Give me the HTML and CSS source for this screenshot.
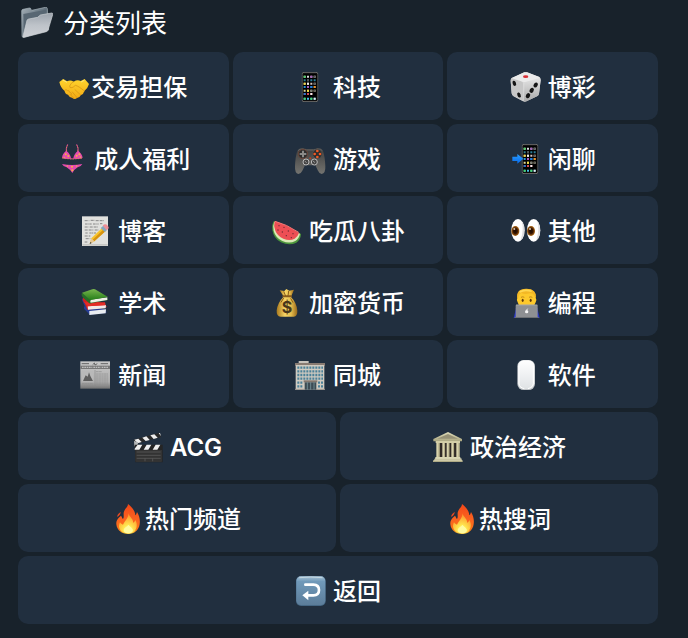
FILE: index.html
```html
<!doctype html>
<html lang="zh-CN">
  <head>
    <meta charset="UTF-8" />
    <meta name="viewport" content="width=device-width, initial-scale=1.0" />
    <title>分类列表</title>
    <link rel="stylesheet" href="styles.css">
  </head>
  <body>
    <!-- 共用渐变和手机图形 -->
    <svg class="defs" width="0" height="0" aria-hidden="true">
      <defs>
        <linearGradient id="folderBack" x1="0" y1="0" x2="1" y2="1">
          <stop offset="0" stop-color="#a5b0b8" />
          <stop offset="0.5" stop-color="#5e6d78" />
          <stop offset="1" stop-color="#94a0a9" />
        </linearGradient>
        <linearGradient id="folderFront" x1="0" y1="0" x2="0" y2="1">
          <stop offset="0" stop-color="#9ba3ac" />
          <stop offset="0.5" stop-color="#bec3c9" />
          <stop offset="1" stop-color="#cdd0d5" />
        </linearGradient>
        <linearGradient id="hand" x1="0" y1="0" x2="0" y2="1">
          <stop offset="0" stop-color="#ffd52e" />
          <stop offset="1" stop-color="#f2a914" />
        </linearGradient>
        <linearGradient id="pad" x1="0" y1="0" x2="0" y2="1">
          <stop offset="0" stop-color="#3d3d3d" />
          <stop offset="1" stop-color="#747470" />
        </linearGradient>
        <linearGradient id="dieSide" x1="0" y1="0" x2="0" y2="1">
          <stop offset="0" stop-color="#e4e4e4" />
          <stop offset="1" stop-color="#a9a9a9" />
        </linearGradient>
        <linearGradient id="arrow" x1="0" y1="0" x2="0" y2="1">
          <stop offset="0" stop-color="#2ba0ff" />
          <stop offset="1" stop-color="#0868e8" />
        </linearGradient>
        <linearGradient id="gold" x1="0" y1="0" x2="1" y2="0">
          <stop offset="0" stop-color="#a9791d" />
          <stop offset="0.4" stop-color="#f6d667" />
          <stop offset="0.7" stop-color="#e6bd4d" />
          <stop offset="1" stop-color="#99691a" />
        </linearGradient>
        <linearGradient id="book" x1="0" y1="0" x2="0" y2="1">
          <stop offset="0" stop-color="#79b64f" />
          <stop offset="1" stop-color="#267f19" />
        </linearGradient>
        <linearGradient id="mouse" x1="0" y1="0" x2="0" y2="1">
          <stop offset="0" stop-color="#ffffff" />
          <stop offset="0.6" stop-color="#eceef0" />
          <stop offset="1" stop-color="#dfe2e4" />
        </linearGradient>
        <linearGradient id="stone" x1="0" y1="0" x2="0" y2="1">
          <stop offset="0" stop-color="#dedbb9" />
          <stop offset="1" stop-color="#aaa680" />
        </linearGradient>
        <linearGradient id="paper" x1="0" y1="0" x2="0" y2="1">
          <stop offset="0" stop-color="#c9c9c9" />
          <stop offset="0.75" stop-color="#adadad" />
          <stop offset="1" stop-color="#737373" />
        </linearGradient>
        <linearGradient id="key" x1="0" y1="0" x2="0" y2="1">
          <stop offset="0" stop-color="#a8c3d6" />
          <stop offset="0.18" stop-color="#7099b9" />
          <stop offset="1" stop-color="#5c7d9a" />
        </linearGradient>
        <linearGradient id="flame" x1="0" y1="0" x2="0" y2="1">
          <stop offset="0" stop-color="#f24718" />
          <stop offset="0.5" stop-color="#fa6220" />
          <stop offset="0.85" stop-color="#fb7417" />
          <stop offset="1" stop-color="#ffd23c" />
        </linearGradient>
        <radialGradient id="flameCore" cx="0.5" cy="0.85" r="0.8">
          <stop offset="0" stop-color="#ffffd5" />
          <stop offset="0.3" stop-color="#ffea51" />
          <stop offset="1" stop-color="#fd9029" />
        </radialGradient>
        <radialGradient id="iris">
          <stop offset="0" stop-color="#160800" />
          <stop offset="0.5" stop-color="#361400" />
          <stop offset="1" stop-color="#b26b18" />
        </radialGradient>

        <symbol id="phone" viewBox="0 0 50 90">
          <rect x="1" y="1" width="48" height="88" rx="6" fill="#111" stroke="#6c6c6a" stroke-width="3" />
          <rect x="5" y="6" width="40" height="79" rx="2" fill="#000" />
          <g stroke-width="6" stroke-dasharray="6 4">
            <path d="M6 14h40" stroke="#d9dbe0" />
            <path d="M6 25h40" stroke="#2a7d98" />
            <path d="M6 35h40" stroke="#d7c5bd" />
            <path d="M6 45h40" stroke="#2994d9" />
            <path d="M6 56h40" stroke="#ded79c" />
            <path d="M6 66h28" stroke="#d34b55" />
            <path d="M6 80h40" stroke="#45bde7" />
          </g>
          <path d="M6 11h6v6H6zM6 77h6v6H6zM26 77h6v6h-6z" fill="#4cd867" />
          <path d="M26 11h6v6h-6zM16 42h6v6h-6z" fill="#a65bbd" />
          <path d="M36 42h6v6h-6z" fill="#ff8f12" />
          <path d="M6 32h6v6H6zM16 53h6v6h-6z" fill="#f0dc3d" />
          <path d="M36 32h6v6h-6zM36 53h6v6h-6zM36 11h6v6h-6zM16 22h6v6h-6z" fill="#555" />
          <path d="M26 53h6v6h-6z" fill="#777" />
          <path d="M6 63h6v6H6zM26 42h6v6h-6z" fill="#2479d6" />
          <path d="M26 63h6v6h-6zM36 77h6v6h-6zM16 32h6v6h-6z" fill="#eee" />
        </symbol>
        <symbol id="fire" viewBox="0 0 90 90">
          <path d="M45 0C56 9 67 21 67 34C70 32 71 27 72 24C79 35 82 47 80 61C77 79 64 90 46 90C26 90 12 79 10 61C9 48 17 41 24 35C27 39 28 43 30 45C35 37 29 29 34 20C37 13 45 9 45 0Z" fill="url(#flame)" />
          <path d="M23 23C18 28 12 31 13 39C19 35 23 30 23 23Z" fill="#e54922" />
          <path d="M46 28C50 40 62 46 60 56C65 55 66 51 67 48C74 59 73 76 62 83C52 90 34 89 25 81C16 73 17 64 21 55C24 59 26 61 30 62C36 50 47 42 46 28Z" fill="url(#flameCore)" />
          <path d="M46 62C50 67 54 68 58 74C63 81 56 88 46 88C36 88 30 82 33 75C36 69 43 68 46 62Z" fill="#fffba0" />
        </symbol>
      </defs>
    </svg>

    <main class="panel">
      <h1 class="title">
        <svg class="title-icon" viewBox="0 0 96 96" aria-hidden="true">
          <path d="M2 12Q2 8 6 7L25 3Q29 2 30 7L32 10L73 1Q78 0 79 5L83 68L8 91Q3 92 3 86Z" fill="url(#folderBack)" stroke="#a4b0b8" stroke-width="2" />
          <path d="M7 21L75 8L78 55L9 74Z" fill="#586773" />
          <path d="M18 40Q19 37 23 36L50 31L58 24L92 18Q97 18 95 23L81 70Q80 73 76 74L10 91Q5 92 6 87Z" fill="url(#folderFront)" stroke="#cfd3d7" stroke-width="2" />
        </svg>
        <span class="label">分类列表</span>
      </h1>

      <div class="keyboard">
        <div class="row">
          <button class="key tight" type="button">
            <svg class="icon" viewBox="0 0 90 90" aria-hidden="true">
              <path d="M1 30L13 21L24 28Q34 23 44 29Q55 22 65 27L77 21L90 36Q86 50 76 57Q74 67 65 70Q62 78 54 78Q47 84 39 77Q31 76 27 68Q18 66 17 57Q5 48 1 30Z" fill="url(#hand)" />
              <path d="M44 29Q35 33 32 42Q31 49 39 47Q44 45 49 40Q59 42 76 57M48 53L65 69M40 60L54 77M33 67L44 78M16 56Q21 49 26 56Q31 54 32 61Q38 61 38 67" fill="none" stroke="#d18f14" stroke-width="2" stroke-linecap="round" />
              <path d="M11 24L24 31M76 25L66 30" stroke="#ffe77b" stroke-width="3" />
            </svg>
            <span class="label">交易担保</span>
          </button>
          <button class="key" type="button">
            <svg class="icon" viewBox="0 0 90 90" aria-hidden="true">
              <use href="#phone" x="20" y="0" width="50" height="90" />
            </svg>
            <span class="label">科技</span>
          </button>
          <button class="key" type="button">
            <svg class="icon" viewBox="0 0 90 90" aria-hidden="true">
              <path d="M4 19L43 1Q47 0 51 1L88 15Q93 18 92 24L87 65Q86 70 81 73L49 88Q44 90 39 88L11 73Q6 70 5 64L2 26Q2 21 4 19Z" fill="#dadada" />
              <path d="M4 18L34 28Q40 30 39 37L41 88L11 73Q6 70 5 64L2 26Z" fill="#c7c7c7" />
              <path d="M89 18L49 29Q43 31 43 37L42 89Q46 90 50 88L81 73Q86 70 87 65L92 24Z" fill="url(#dieSide)" />
              <path d="M5 18L43 1Q47 0 51 1L88 15Q90 17 87 19L48 29Q43 31 38 29Z" fill="#ebebeb" />
              <ellipse cx="47" cy="14" rx="8" ry="4" fill="#d82f37" />
              <g fill="#151515">
                <ellipse cx="13" cy="34" rx="5" ry="8" transform="rotate(-20 13 34)" />
                <ellipse cx="27" cy="69" rx="5" ry="8" transform="rotate(-20 27 69)" />
                <ellipse cx="77" cy="39" rx="6" ry="8" transform="rotate(32 77 39)" />
                <ellipse cx="65" cy="55" rx="6" ry="8" transform="rotate(32 65 55)" />
                <ellipse cx="54" cy="71" rx="6" ry="8" transform="rotate(32 54 71)" />
              </g>
            </svg>
            <span class="label">博彩</span>
          </button>
        </div>

        <div class="row">
          <button class="key" type="button">
            <svg class="icon" viewBox="0 0 90 90" aria-hidden="true">
              <path d="M35 1Q29 12 31 25M62 1Q68 12 66 25M20 42Q49 47 78 42" fill="none" stroke="#d9439f" stroke-width="3" />
              <path d="M31 20Q44 31 45 43Q31 46 18 41Q19 29 31 20ZM66 20Q53 31 52 43Q66 46 80 41Q78 29 66 20ZM18 60Q48 66 79 60Q76 67 65 70Q55 76 49 87Q42 76 32 70Q21 67 18 60Z" fill="#e54baf" />
              <path d="M18 42Q48 48 80 42M32 21Q30 11 35 3M65 21Q68 11 62 3" fill="none" stroke="#e5ad2c" stroke-width="2" stroke-dasharray="4 4" />
              <g fill="#f6b43e">
                <circle cx="29" cy="31" r="3" /><circle cx="37" cy="36" r="3" /><circle cx="25" cy="40" r="2" />
                <circle cx="62" cy="35" r="3" /><circle cx="70" cy="31" r="3" /><circle cx="73" cy="39" r="2" />
                <circle cx="34" cy="66" r="2" /><circle cx="48" cy="68" r="3" /><circle cx="62" cy="66" r="2" /><circle cx="49" cy="79" r="3" />
              </g>
            </svg>
            <span class="label">成人福利</span>
          </button>
          <button class="key" type="button">
            <svg class="icon" viewBox="0 0 90 90" aria-hidden="true">
              <path d="M7 20Q12 11 23 12L34 15H57L68 12Q79 11 84 20Q90 39 91 67Q92 89 80 90Q74 90 69 80L61 64H30L22 80Q17 90 10 90Q-1 88 0 67Q1 38 7 20Z" fill="url(#pad)" />
              <path d="M9 20Q13 14 24 15L35 18H56L67 15Q78 14 82 20" fill="none" stroke="#777" stroke-width="2" />
              <circle cx="24" cy="30" r="14" fill="#2e2e2e" stroke="#7b4938" stroke-width="2" />
              <circle cx="67" cy="30" r="14" fill="#2e2e2e" stroke="#555" stroke-width="2" />
              <path d="M21 20h6v7h7v6h-7v7h-6v-7h-7v-6h7z" fill="#8a8a88" />
              <g fill="#f05a25"><circle cx="67" cy="21" r="4" /><circle cx="59" cy="30" r="4" /><circle cx="75" cy="30" r="4" /><circle cx="67" cy="39" r="4" /></g>
              <circle cx="33" cy="54" r="9" fill="#444" stroke="#bababa" stroke-width="3" />
              <circle cx="58" cy="54" r="9" fill="#444" stroke="#bababa" stroke-width="3" />
              <path d="M29 51L35 56M54 51L60 56" stroke="#999" stroke-width="3" />
              <circle cx="46" cy="43" r="3" fill="#bd3f22" />
            </svg>
            <span class="label">游戏</span>
          </button>
          <button class="key" type="button">
            <svg class="icon" viewBox="0 0 90 90" aria-hidden="true">
              <use href="#phone" x="35" y="0" width="50" height="90" />
              <path d="M7 38H22V30L40 44L22 59V51H7Z" fill="url(#arrow)" />
            </svg>
            <span class="label">闲聊</span>
          </button>
        </div>

        <div class="row">
          <button class="key" type="button">
            <svg class="icon" viewBox="0 0 90 90" aria-hidden="true">
              <path d="M6 1H84V90H6Z" fill="#e1e1de" />
              <path d="M7 84H83V89H7Z" fill="#c7c7c4" />
              <path d="M14 14h14m4-1h11m4 1h26M15 24h20m4 0h17m4-1h7M14 33h12m3 0h26M14 42h27m3 0h12M16 51h8m4 0h20M14 60h17M17 68h14M14 78h9" fill="none" stroke="#868686" stroke-width="3" stroke-dasharray="7 1 3 2" />
              <path d="M29 84L34 67L67 35L77 45L43 76Z" fill="#f6c32c" />
              <path d="M38 71L72 39L77 45L43 76Z" fill="#d8930f" />
              <path d="M29 84L34 67L43 76Z" fill="#e6c797" /><path d="M29 84L31 78L35 81Z" fill="#383636" />
              <path d="M62 36L70 29L82 41L74 48Z" fill="#86a8bd" />
              <path d="M68 28L74 25Q79 24 83 29Q87 33 86 37L80 43Z" fill="#ee8f96" />
            </svg>
            <span class="label">博客</span>
          </button>
          <button class="key" type="button">
            <svg class="icon" viewBox="0 0 90 90" aria-hidden="true">
              <path d="M9 15Q2 25 4 42Q8 68 30 79Q55 90 76 80Q89 71 90 54L84 51Z" fill="#4c963c" />
              <path d="M10 17Q4 30 8 45Q14 66 34 75Q55 84 73 75Q84 68 87 53Z" fill="#dce9b6" />
              <path d="M11 15Q7 29 13 44Q19 60 37 68Q56 76 71 68Q80 63 84 51Q45 25 11 15Z" fill="#ed4f54" />
              <path d="M12 16Q45 24 83 49" fill="none" stroke="#f47776" stroke-width="3" />
              <g fill="#682a31"><circle cx="24" cy="29" r="2" /><circle cx="39" cy="34" r="2" /><circle cx="21" cy="42" r="2" /><circle cx="34" cy="48" r="2" /><circle cx="52" cy="45" r="2" /><circle cx="66" cy="53" r="2" /><circle cx="46" cy="59" r="2" /><circle cx="61" cy="65" r="2" /></g>
            </svg>
            <span class="label">吃瓜八卦</span>
          </button>
          <button class="key" type="button">
            <svg class="icon" viewBox="0 0 90 90" aria-hidden="true">
              <ellipse cx="24" cy="43" rx="20" ry="34" fill="#fff" /><ellipse cx="71" cy="43" rx="20" ry="34" fill="#fff" />
              <path d="M35 16Q44 27 43 43Q43 64 32 73Q38 54 38 40Q39 27 35 16ZM82 16Q91 27 90 43Q90 64 79 73Q85 54 85 40Q86 27 82 16Z" fill="#dedddf" />
              <ellipse cx="16" cy="45" rx="12" ry="15" fill="url(#iris)" /><ellipse cx="63" cy="45" rx="12" ry="15" fill="url(#iris)" />
              <circle cx="13" cy="39" r="3" fill="#d9c5b0" /><circle cx="60" cy="39" r="3" fill="#d9c5b0" />
            </svg>
            <span class="label">其他</span>
          </button>
        </div>

        <div class="row">
          <button class="key" type="button">
            <svg class="icon" viewBox="0 0 90 90" aria-hidden="true">
              <path d="M8 31Q3 37 9 43L14 54Q9 61 15 65L29 80L79 75L78 65L35 57Z" fill="#263c94" />
              <path d="M28 69L78 64L77 76L28 81Z" fill="#e9edf0" />
              <path d="M10 27Q5 36 14 46L22 65L79 58L80 55L68 48Z" fill="#d41f20" />
              <path d="M23 55L78 51L77 61L24 65Z" fill="#f2e9e7" />
              <path d="M12 43L75 43L77 52L23 55Z" fill="#e42d26" />
              <path d="M6 15Q2 20 9 29L27 45Q30 48 34 46L84 36L82 31L38 31Z" fill="#286c28" />
              <path d="M33 35L82 28L82 36L32 44Q29 40 33 35Z" fill="#eff1e7" />
              <path d="M6 14L37 4Q41 2 45 4L84 27L34 35Q29 36 26 32Z" fill="url(#book)" />
            </svg>
            <span class="label">学术</span>
          </button>
          <button class="key" type="button">
            <svg class="icon" viewBox="0 0 90 90" aria-hidden="true">
              <path d="M26 7L40 9L46 3L55 8L69 5L61 24H37Z" fill="url(#gold)" />
              <path d="M37 27H60Q77 44 79 68Q80 84 68 86H29Q16 85 17 68Q19 45 37 27Z" fill="url(#gold)" />
              <path d="M38 10L44 24M53 9L51 24M38 30L30 43M59 31L66 44" stroke="#8a5e16" stroke-width="3" />
              <rect x="34" y="22" width="29" height="6" rx="3" fill="#875b1d" />
              <text class="coin-mark" x="48" y="76" text-anchor="middle">$</text>
            </svg>
            <span class="label">加密货币</span>
          </button>
          <button class="key" type="button">
            <svg class="icon" viewBox="0 0 90 90" aria-hidden="true">
              <path d="M18 61L27 53H74L82 61L89 90H11Z" fill="#2937c6" />
              <path d="M22 29Q20 4 50 3Q80 4 77 29Q81 34 77 43Q72 60 50 61Q27 60 23 43Q19 34 22 29Z" fill="#fdc92c" />
              <path d="M22 31Q17 3 48 2Q80 1 78 31L72 22Q68 15 60 16Q43 20 34 15Q26 18 25 29Z" fill="#f3b725" />
              <path d="M29 12Q44 3 65 10" stroke="#ffd852" stroke-width="5" fill="none" />
              <ellipse cx="38" cy="37" rx="3" ry="5" fill="#5b3510" /><ellipse cx="62" cy="37" rx="3" ry="5" fill="#5b3510" />
              <path d="M33 28Q38 25 43 28M57 28Q62 25 67 28" fill="none" stroke="#a36b12" stroke-width="2" />
              <rect x="17" y="50" width="66" height="39" rx="3" fill="#8e9093" />
              <path d="M18 51H82" stroke="#b1b2b4" stroke-width="2" /><path d="M14 87H86V90H14Z" fill="#6f7275" />
              <circle cx="50" cy="71" r="5" fill="#f4f4f4" /><path d="M50 66L53 62" stroke="#f4f4f4" stroke-width="3" />
            </svg>
            <span class="label">编程</span>
          </button>
        </div>

        <div class="row">
          <button class="key" type="button">
            <svg class="icon" viewBox="0 0 90 90" aria-hidden="true">
              <path d="M1 4H90V86H1Z" fill="url(#paper)" /><path d="M1 17H90V27H1Z" fill="#777" />
              <path d="M6 22h31m3 0h22m3 0h20" stroke="#bebebe" stroke-width="4" stroke-dasharray="5 2" />
              <path d="M38 14L43 9L45 15L52 11M5 11h22M62 11h22" fill="none" stroke="#656565" stroke-width="3" />
              <path d="M6 32H40V64H6Z" fill="#b9b9b9" /><path d="M9 63L17 46L23 50L27 37L31 48L39 63Z" fill="#5e5e5e" />
              <path d="M48 35h18M48 42h36M48 48h36M48 54h36M48 60h36M48 66h36M48 72h36M6 71h34M6 76h34" stroke="#8d8d8d" stroke-width="2" stroke-dasharray="7 1" />
              <path d="M45 30V82" stroke="#888" stroke-width="2" />
            </svg>
            <span class="label">新闻</span>
          </button>
          <button class="key" type="button">
            <svg class="icon" viewBox="0 0 90 90" aria-hidden="true">
              <path d="M11 3H41V14H11Z" fill="#c8c3bc" /><path d="M0 9H90V17H0Z" fill="#887b72" />
              <path d="M2 15H88V89H2Z" fill="#d0cbc1" />
              <path d="M7 23H84M7 34H84M7 45H84M7 56H84M7 68H25M69 68H84M7 79H25M69 79H84" stroke="#4b8199" stroke-width="7" stroke-dasharray="6 3" />
              <path d="M26 61H67V67H26Z" fill="#84786e" /><path d="M29 67H64V89H29Z" fill="#3d4c54" />
              <path d="M37 67V89M47 67V89M57 67V89" stroke="#86a7ae" stroke-width="2" /><path d="M0 88H29M64 88H90" stroke="#a39d94" stroke-width="3" />
            </svg>
            <span class="label">同城</span>
          </button>
          <button class="key" type="button">
            <svg class="icon" viewBox="0 0 90 90" aria-hidden="true">
              <rect x="22" y="0" width="53" height="90" rx="19" fill="#c0c4c7" />
              <rect x="24" y="1" width="49" height="86" rx="17" fill="url(#mouse)" />
              <path d="M27 17V70Q28 83 43 86M70 17V70Q69 82 54 86" fill="none" stroke="#fff" stroke-width="3" />
            </svg>
            <span class="label">软件</span>
          </button>
        </div>

        <div class="row">
          <button class="key" type="button">
            <svg class="icon" viewBox="0 0 90 90" aria-hidden="true">
              <path d="M5 23L83 2L87 15L9 37Z" fill="#292929" />
              <path d="M7 23L19 20L29 30L17 34ZM31 17L43 13L53 24L41 27ZM55 10L67 7L77 17L65 21ZM80 3L84 3L87 13Z" fill="#eee" />
              <path d="M6 27L19 31L15 43H7Z" fill="#b5b8b9" />
              <path d="M8 38H92V91H10Z" fill="#252525" />
              <path d="M17 38H31L22 53H8V50ZM44 38H58L49 53H35ZM71 38H85L76 53H62Z" fill="#f0f0f0" />
              <path d="M10 54H90V87Q90 90 87 90H13Q10 90 10 87Z" fill="#333" />
              <path d="M14 60H86M14 70H86M14 79H86M39 79V88M62 79V88" stroke="#606060" stroke-width="2" />
            </svg>
            <span class="label latin">ACG</span>
          </button>
          <button class="key" type="button">
            <svg class="icon" viewBox="0 0 90 90" aria-hidden="true">
              <path d="M15 24H81V79H15Z" fill="#302a26" />
              <path d="M4 21L48 0L90 21V28H4Z" fill="url(#stone)" /><path d="M16 20L48 6L78 20Z" fill="#969176" />
              <path d="M11 27H84V33H11Z" fill="#d2cda6" />
              <path d="M13 32H23V76H13ZM31 32H39V76H31ZM44 32H52V76H44ZM58 32H66V76H58ZM73 32H83V76H73Z" fill="#d8d3ac" />
              <path d="M21 33V76M38 33V76M51 33V76M65 33V76M81 33V76" stroke="#918b68" stroke-width="2" />
              <path d="M10 75H85V80H89V85H92V90H3V85H7V80H10Z" fill="url(#stone)" /><path d="M9 80H88M6 85H90" stroke="#e0dbb9" stroke-width="2" />
            </svg>
            <span class="label">政治经济</span>
          </button>
        </div>

        <div class="row">
          <button class="key tight" type="button">
            <svg class="icon" viewBox="0 0 90 90" aria-hidden="true"><use href="#fire" width="90" height="90" /></svg>
            <span class="label">热门频道</span>
          </button>
          <button class="key tight" type="button">
            <svg class="icon" viewBox="0 0 90 90" aria-hidden="true"><use href="#fire" width="90" height="90" /></svg>
            <span class="label">热搜词</span>
          </button>
        </div>

        <div class="row">
          <button class="key" type="button">
            <svg class="icon" viewBox="0 0 90 90" aria-hidden="true">
              <rect x="3" y="0" width="89" height="90" rx="15" fill="#456784" />
              <rect x="4" y="1" width="87" height="86" rx="14" fill="url(#key)" />
              <path d="M13 5Q47 1 82 5" fill="none" stroke="#c5d8e2" stroke-width="3" />
              <path d="M31 26H55Q72 27 72 42Q72 58 55 58H36" fill="none" stroke="#fff" stroke-width="8" stroke-linecap="round" />
              <path d="M40 44L22 58L40 73Z" fill="#fff" />
            </svg>
            <span class="label">返回</span>
          </button>
        </div>
      </div>
    </main>
  </body>
</html>
```

FILE: styles.css
```css
body {
  margin: 0;
  min-height: 100vh;
  background: #18222b;
  color: #fff;
  font-family: Inter, 'Noto Sans CJK SC', sans-serif;
}

.defs {
  position: absolute;
}

.panel {
  padding: 4px 30px 14px 18px;
}

.title {
  display: flex;
  align-items: center;
  gap: 10px;
  margin: 0 0 10px;
  padding-left: 3px;
  font-size: 26px;
  font-weight: 400;
  line-height: 36px;
}

.title-icon {
  width: 32px;
  height: 32px;
}

.keyboard {
  display: flex;
  flex-direction: column;
  gap: 4px;
}

.row {
  display: flex;
  gap: 4px;
}

.key {
  display: flex;
  flex: 1 1 0;
  align-items: center;
  justify-content: center;
  gap: 8px;
  min-width: 0;
  height: 68px;
  padding: 2px 0 0;
  border: none;
  border-radius: 10px;
  background: #212f3f;
  color: #fff;
  font-family: inherit;
  font-size: 24px;
  font-weight: 500;
  line-height: 32px;
  white-space: nowrap;
  cursor: pointer;
}

.key:hover {
  background: #293a4d;
}

.key:focus-visible {
  outline: 2px solid #5b9bd5;
}

.tight {
  gap: 2px;
}

.icon {
  flex: none;
  width: 30px;
  height: 30px;
  overflow: visible;
}

.label {
  padding-top: 2px;
}

.latin {
  font-weight: 600;
}

.coin-mark {
  fill: #493719;
  font-size: 48px;
  font-weight: 700;
}
```
